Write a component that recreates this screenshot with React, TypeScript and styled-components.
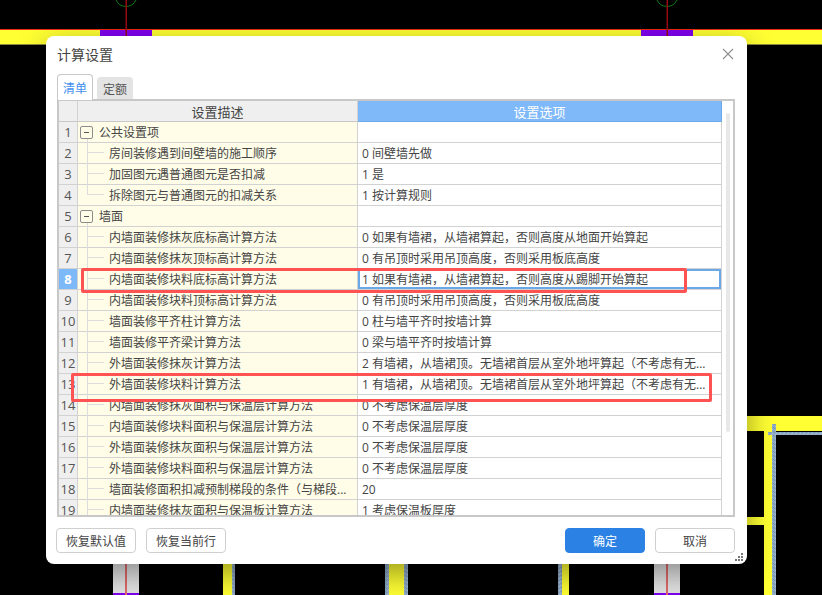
import React from 'react'
import styled, { createGlobalStyle } from 'styled-components'

const GlobalStyle = createGlobalStyle`
html, body {
  margin: 0;
  padding: 0;
  background: #000;
  overflow: hidden;
}
* { box-sizing: border-box; }
`

const Page = styled.div`
position: relative;
width: 822px;
height: 595px;
overflow: hidden;
padding: 36px 0 0 46px;
font-family: "Open Sans", "Noto Sans CJK SC", sans-serif;
color: #444;
`

const CadCanvas = styled.svg`
position: absolute;
top: 0;
left: 0;
`

const Dialog = styled.div`
position: relative;
width: 701px;
height: 528px;
background: #fff;
border-radius: 8px;
box-shadow: 0 10px 30px rgba(0, 0, 0, 0.4);
padding: 0 12px 11px 11px;
display: flex;
flex-direction: column;
`

const TitleBar = styled.div`
height: 38px;
display: flex;
align-items: center;
justify-content: space-between;
padding-bottom: 2px;
`

const Title = styled.div`
font-size: 14px;
color: #444;
`

const CloseButton = styled.button`
border: 0;
background: none;
padding: 0;
margin-right: 1px;
width: 12px;
height: 12px;
display: flex;
cursor: pointer;
`

const Tabs = styled.div`
height: 25px;
display: flex;
align-items: flex-end;
gap: 4px;
position: relative;
z-index: 1;
`

const Tab = styled.div<{ $active?: boolean }>`
width: 36px;
height: ${p => (p.$active ? '26px' : '22px')};
margin-bottom: ${p => (p.$active ? '-1px' : '0')};
display: flex;
align-items: center;
justify-content: center;
font-size: 12px;
border-radius: 4px 4px 0 0;
color: ${p => (p.$active ? '#3f8fee' : '#555')};
background: ${p => (p.$active ? '#fff' : '#e4e4e4')};
border: 1px solid ${p => (p.$active ? '#c8c8c8' : '#e4e4e4')};
border-bottom: 0;
`

const Frame = styled.div`
position: relative;
height: 418px;
border: 2px solid #c8c8c8;
display: flex;
overflow: hidden;
`

const Sheet = styled.div`
width: 663px;
flex: none;
`

const Row = styled.div`
display: grid;
grid-template-columns: 19px 280px 364px;
height: 21px;
`

const HeadNumber = styled.div`
background: #efefef;
border-right: 1px solid #d2d2d2;
border-bottom: 1px solid #c8c8c8;
`

const HeadCell = styled.div<{ $active?: boolean }>`
display: flex;
align-items: center;
justify-content: center;
font-size: 13px;
color: ${p => (p.$active ? '#fff' : '#444')};
background: ${p => (p.$active ? '#7fb9f9' : '#efefef')};
border-bottom: 1px solid ${p => (p.$active ? '#6fa9e8' : '#c8c8c8')};
border-right: 1px solid ${p => (p.$active ? '#6fa9e8' : '#d2d2d2')};
`

const NumberCell = styled.div<{ $selected?: boolean }>`
display: flex;
align-items: center;
justify-content: center;
font-size: 13px;
color: ${p => (p.$selected ? '#fff' : '#555')};
font-weight: ${p => (p.$selected ? 700 : 400)};
background: ${p => (p.$selected ? '#7db8f8' : '#efefef')};
border-right: 1px solid #d2d2d2;
border-bottom: 1px solid #d2d2d2;
`

const DescCell = styled.div`
position: relative;
display: flex;
align-items: center;
font-size: 12px;
white-space: nowrap;
background: #fffde8;
border-right: 1px solid #d2d2d2;
border-bottom: 1px solid #d2d2d2;
`

const GroupText = styled.span`
margin-left: 6px;
`

const ChildText = styled.span`
margin-left: 31px;
`

const Expander = styled.span`
position: relative;
z-index: 1;
margin-left: 2px;
width: 13px;
height: 13px;
border: 1px solid #8c8c8c;
border-radius: 2px;
background: #fffde8;
display: flex;
align-items: center;
justify-content: center;

&::after {
  content: '';
  width: 5px;
  height: 1px;
  background: #555;
}
`

const TreeGuide = styled.span<{ $last?: boolean }>`
position: absolute;
left: 9px;
top: 0;
width: 16px;
height: ${p => (p.$last ? '10px' : '21px')};
border-left: 1px solid #dcdcdc;

&::after {
  content: '';
  position: absolute;
  left: 0;
  top: 9px;
  width: 16px;
  height: 1px;
  background: #dcdcdc;
}
`

const GroupGuide = styled.span`
position: absolute;
left: 9px;
top: 15px;
height: 6px;
border-left: 1px solid #dcdcdc;
`

const ValueCell = styled.div<{ $selected?: boolean }>`
display: flex;
align-items: center;
padding-left: 4px;
font-size: 12px;
white-space: nowrap;
overflow: hidden;
border-right: 1px solid #d2d2d2;
border-bottom: 1px solid #d2d2d2;
box-shadow: ${p => (p.$selected ? 'inset 0 0 0 2px #6aa8e8' : 'none')};
`

const Rail = styled.div`
flex: 1;
padding: 12px 3px 0 4px;
`

const RailThumb = styled.div`
height: 319px;
background: #e8e8e8;
border-radius: 2px;
`

const Callout = styled.div<{ $left: number; $top: number; $width: number; $height: number }>`
position: absolute;
left: ${p => p.$left}px;
top: ${p => p.$top}px;
width: ${p => p.$width}px;
height: ${p => p.$height}px;
border: 3px solid #ff5252;
border-radius: 2px;
`

const Footer = styled.div`
margin: 11px 0 0 -1px;
display: flex;
justify-content: space-between;
`

const ButtonGroup = styled.div`
display: flex;
gap: 10px;
`

const Button = styled.button<{ $primary?: boolean }>`
width: 80px;
height: 25px;
padding: 0;
font-family: inherit;
font-size: 12px;
border-radius: 4px;
color: ${p => (p.$primary ? '#fff' : '#444')};
background: ${p => (p.$primary ? '#2b82e4' : '#fff')};
border: 1px solid ${p => (p.$primary ? '#2b82e4' : '#cfcfcf')};
cursor: pointer;
`

const Grip = styled.svg`
position: absolute;
right: 4px;
bottom: 3px;
`

type Item = { desc: string; value?: string; group?: boolean; last?: boolean }

const ELLIPSIS_TEXT = '有墙裙，从墙裙顶。无墙裙首层从室外地坪算起（不考虑有无...'

const items: Item[] = [
  { desc: '公共设置项', group: true },
  { desc: '房间装修遇到间壁墙的施工顺序', value: '0 间壁墙先做' },
  { desc: '加固图元遇普通图元是否扣减', value: '1 是' },
  { desc: '拆除图元与普通图元的扣减关系', value: '1 按计算规则', last: true },
  { desc: '墙面', group: true },
  { desc: '内墙面装修抹灰底标高计算方法', value: '0 如果有墙裙，从墙裙算起，否则高度从地面开始算起' },
  { desc: '内墙面装修抹灰顶标高计算方法', value: '0 有吊顶时采用吊顶高度，否则采用板底高度' },
  { desc: '内墙面装修块料底标高计算方法', value: '1 如果有墙裙，从墙裙算起，否则高度从踢脚开始算起' },
  { desc: '内墙面装修块料顶标高计算方法', value: '0 有吊顶时采用吊顶高度，否则采用板底高度' },
  { desc: '墙面装修平齐柱计算方法', value: '0 柱与墙平齐时按墙计算' },
  { desc: '墙面装修平齐梁计算方法', value: '0 梁与墙平齐时按墙计算' },
  { desc: '外墙面装修抹灰计算方法', value: '2 ' + ELLIPSIS_TEXT },
  { desc: '外墙面装修块料计算方法', value: '1 ' + ELLIPSIS_TEXT },
  { desc: '内墙面装修抹灰面积与保温层计算方法', value: '0 不考虑保温层厚度' },
  { desc: '内墙面装修块料面积与保温层计算方法', value: '0 不考虑保温层厚度' },
  { desc: '外墙面装修抹灰面积与保温层计算方法', value: '0 不考虑保温层厚度' },
  { desc: '外墙面装修块料面积与保温层计算方法', value: '0 不考虑保温层厚度' },
  { desc: '墙面装修面积扣减预制梯段的条件（与梯段...', value: '20' },
  { desc: '内墙面装修抹灰面积与保温板计算方法', value: '1 考虑保温板厚度' },
]

const SELECTED_ROW = 8

const CadBackground = () => (
  <CadCanvas width="822" height="595" viewBox="0 0 822 595">
    <defs>
      <pattern id="speckle" width="4" height="4" patternUnits="userSpaceOnUse">
        <rect width="4" height="4" fill="#8ea9c6" />
        <rect x="0" y="1" width="1" height="1" fill="#a9bfd6" />
        <rect x="2" y="0" width="1" height="1" fill="#7793b3" />
        <rect x="3" y="2" width="1" height="1" fill="#a9bfd6" />
        <rect x="1" y="3" width="1" height="1" fill="#7793b3" />
      </pattern>
    </defs>
    <rect width="822" height="595" fill="#000" />
    {/* top wall */}
    <rect x="0" y="30" width="822" height="15" fill="#ffff33" />
    <rect x="0" y="29" width="822" height="1" fill="#f02a10" />
    <rect x="0" y="44" width="822" height="1" fill="#8a8a40" />
    <rect x="100" y="30" width="52" height="15" fill="#8000f0" />
    <rect x="641" y="30" width="52" height="15" fill="#8000f0" />
    <path d="M116 0a11 11 0 0 0 20 0" fill="none" stroke="#0b7a12" strokeWidth="1" />
    <path d="M657 0a11 11 0 0 0 20 0" fill="none" stroke="#0b7a12" strokeWidth="1" />
    <rect x="125.5" y="0" width="1.5" height="45" fill="#960a14" />
    <rect x="666.5" y="0" width="1.5" height="45" fill="#960a14" />
    {/* right side walls */}
    <rect x="740" y="416" width="82" height="15" fill="#ffff33" />
    <rect x="764" y="431" width="8" height="164" fill="#ffff33" />
    <rect x="740" y="517" width="24" height="8" fill="#ffff33" />
    <rect x="772" y="424" width="4" height="171" fill="url(#speckle)" />
    <rect x="768" y="432" width="54" height="3" fill="url(#speckle)" />
    {/* bottom stubs */}
    <rect x="113" y="550" width="26" height="43" fill="#e4e4e4" />
    <rect x="113" y="593" width="26" height="2" fill="#8000f0" />
    <rect x="125" y="550" width="2" height="45" fill="#e06a6a" />
    <rect x="654" y="550" width="26" height="43" fill="#e4e4e4" />
    <rect x="654" y="593" width="26" height="2" fill="#8000f0" />
    <rect x="666" y="550" width="2" height="45" fill="#e06a6a" />
    <rect x="223" y="550" width="9" height="45" fill="#ffff33" />
    <rect x="232" y="550" width="3" height="45" fill="url(#speckle)" />
    <rect x="385" y="550" width="4" height="45" fill="url(#speckle)" />
    <rect x="389" y="550" width="15" height="45" fill="#ffff33" />
    <rect x="404" y="550" width="4" height="45" fill="url(#speckle)" />
    <rect x="558" y="550" width="4" height="45" fill="url(#speckle)" />
    <rect x="562" y="550" width="7" height="45" fill="#ffff33" />
  </CadCanvas>
)

const App = () => (
  <Page>
    <GlobalStyle />
    <CadBackground />
    <Dialog>
      <TitleBar>
        <Title>计算设置</Title>
        <CloseButton aria-label="关闭">
          <svg width="12" height="12" viewBox="0 0 12 12">
            <path d="M1 1l10 10M11 1L1 11" stroke="#8f8f8f" strokeWidth="1.1" fill="none" />
          </svg>
        </CloseButton>
      </TitleBar>
      <Tabs>
        <Tab $active>清单</Tab>
        <Tab>定额</Tab>
      </Tabs>
      <Frame>
        <Sheet>
          <Row>
            <HeadNumber />
            <HeadCell>设置描述</HeadCell>
            <HeadCell $active>设置选项</HeadCell>
          </Row>
          {items.map((item, index) => {
            const rowNumber = index + 1
            const selected = rowNumber === SELECTED_ROW
            return (
              <Row key={rowNumber}>
                <NumberCell $selected={selected}>{rowNumber}</NumberCell>
                <DescCell>
                  {item.group ? (
                    <>
                      <Expander />
                      <GroupGuide />
                      <GroupText>{item.desc}</GroupText>
                    </>
                  ) : (
                    <>
                      <TreeGuide $last={item.last} />
                      <ChildText>{item.desc}</ChildText>
                    </>
                  )}
                </DescCell>
                <ValueCell $selected={selected}>{item.value}</ValueCell>
              </Row>
            )
          })}
        </Sheet>
        <Rail>
          <RailThumb />
        </Rail>
        <Callout $left={22} $top={167} $width={606} $height={25} />
        <Callout $left={12} $top={272} $width={641} $height={29} />
      </Frame>
      <Footer>
        <ButtonGroup>
          <Button>恢复默认值</Button>
          <Button>恢复当前行</Button>
        </ButtonGroup>
        <ButtonGroup>
          <Button $primary>确定</Button>
          <Button>取消</Button>
        </ButtonGroup>
      </Footer>
      <Grip width="8" height="8" viewBox="0 0 8 8">
        <path d="M6 0h2v2H6zM3 3h2v2H3zM6 3h2v2H6zM0 6h2v2H0zM3 6h2v2H3zM6 6h2v2H6z" fill="#777" />
      </Grip>
    </Dialog>
  </Page>
)

export default App
